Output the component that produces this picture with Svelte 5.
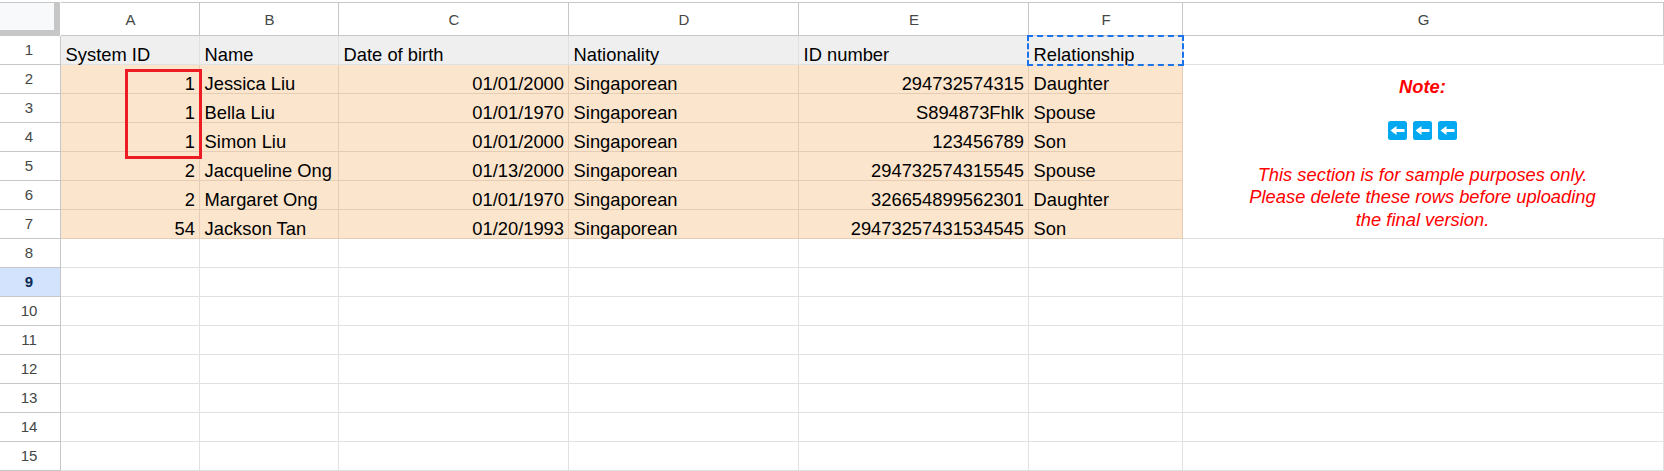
<script>
  const cols = ['A','B','C','D','E','F','G'];
  const headers = ['System ID','Name','Date of birth','Nationality','ID number','Relationship'];
  const rows = [
    ['1','Jessica Liu','01/01/2000','Singaporean','294732574315','Daughter'],
    ['1','Bella Liu','01/01/1970','Singaporean','S894873Fhlk','Spouse'],
    ['1','Simon Liu','01/01/2000','Singaporean','123456789','Son'],
    ['2','Jacqueline Ong','01/13/2000','Singaporean','294732574315545','Spouse'],
    ['2','Margaret Ong','01/01/1970','Singaporean','326654899562301','Daughter'],
    ['54','Jackson Tan','01/20/1993','Singaporean','29473257431534545','Son']
  ];
  const rightAligned = [true,false,true,false,true,false];
  const emptyRows = [8,9,10,11,12,13,14,15];
</script>

<div class="sheet">
  <div class="corner"></div>
  {#each cols as c}
    <div class="colhead">{c}</div>
  {/each}

  <div class="rowhead">1</div>
  {#each headers as h}
    <div class="cell title">{h}</div>
  {/each}
  <div class="cell blank"></div>

  {#each rows as r, ri}
    <div class="rowhead">{ri + 2}</div>
    {#each r as v, i}
      <div class="cell data" class:right={rightAligned[i]}>{v}</div>
    {/each}
    {#if ri === 0}
      <div class="note">
        <div class="note-title">Note:</div>
        <div class="arrows">
          {#each [0,1,2] as k}
            <svg width="19" height="19" viewBox="0 0 19 19" aria-hidden="true">
              <rect width="19" height="19" rx="2.5" fill="#03a9f0"/>
              <path d="M2.5 9.5 8.5 5V8h8v3h-8v3z" fill="#fff"/>
            </svg>
          {/each}
        </div>
        <div class="note-text">This section is for sample purposes only.<br>Please delete these rows before uploading<br>the final version.</div>
      </div>
    {/if}
  {/each}

  {#each emptyRows as n}
    <div class="rowhead" class:active={n === 9}>{n}</div>
    {#each cols as c}
      <div class="cell"></div>
    {/each}
  {/each}

  <div class="redbox"></div>
  <div class="copy"></div>
</div>

<style>
  :global(body) { margin: 0; background: #fff; }
  .sheet {
    position: relative;
    display: grid;
    grid-template-columns: 61px 139px 139px 230px 230px 230px 154px 481px;
    grid-template-rows: 34px repeat(15, 29px);
    width: 1664px;
    height: 471px;
    padding-top: 2px;
    box-sizing: border-box;
    overflow: hidden;
    font-family: "Liberation Sans", Arial, sans-serif;
    font-size: 18.33px;
    color: #000;
  }
  .corner {
    background: #f8f9fa;
    box-sizing: border-box;
    border-top: 1px solid #c7c7c7;
    border-right: 6px solid #c7c7c7;
    border-bottom: 6px solid #c7c7c7;
    margin-right: 1px;
  }
  .colhead {
    box-sizing: border-box;
    border-top: 1px solid #c7c7c7;
    border-right: 1px solid #c7c7c7;
    border-bottom: 1px solid #c7c7c7;
    display: flex;
    align-items: center;
    justify-content: center;
    font-size: 15px;
    color: #444746;
    padding-left: 1px;
  }
  .colhead:first-of-type { border-left: 1px solid #c7c7c7; }
  .rowhead {
    box-sizing: border-box;
    border-right: 1px solid #c7c7c7;
    border-bottom: 1px solid #c7c7c7;
    display: flex;
    align-items: center;
    justify-content: center;
    font-size: 15px;
    color: #444746;
    padding: 0 2px 2px 0;
  }
  .rowhead.active {
    background: #d3e3fd;
    color: #0b2a57;
    font-weight: 700;
  }
  .cell {
    box-sizing: border-box;
    border-right: 1px solid #e1e1e1;
    border-bottom: 1px solid #e1e1e1;
    padding: 10px 4px 0 4.6px;
    white-space: nowrap;
    line-height: 18px;
  }
  .title { background: #efefef; }
  .data {
    background: #fbe5cd;
    border-right-color: #e5cdb5;
    border-bottom-color: #e5cdb5;
  }
  .right { text-align: right; }
  .note {
    grid-column: 8;
    grid-row: 3 / span 6;
    box-sizing: border-box;
    border-bottom: 1px solid #e1e1e1;
    text-align: center;
    color: #ff0000;
    font-style: italic;
    padding: 11px 2px 0 0;
  }
  .note-title { font-weight: 700; line-height: 22px; }
  .arrows {
    display: flex;
    justify-content: center;
    gap: 6px;
    margin-top: 23px;
    height: 19px;
  }
  .note-text { line-height: 22.3px; margin-top: 24px; }
  .redbox {
    position: absolute;
    left: 125px;
    top: 69px;
    width: 77px;
    height: 90px;
    box-sizing: border-box;
    border: 3px solid #ed1c24;
  }
  .copy {
    position: absolute;
    left: 1027px;
    top: 35px;
    width: 157px;
    height: 31px;
    box-sizing: border-box;
    border: 2px dashed #1a73e8;
  }
</style>
